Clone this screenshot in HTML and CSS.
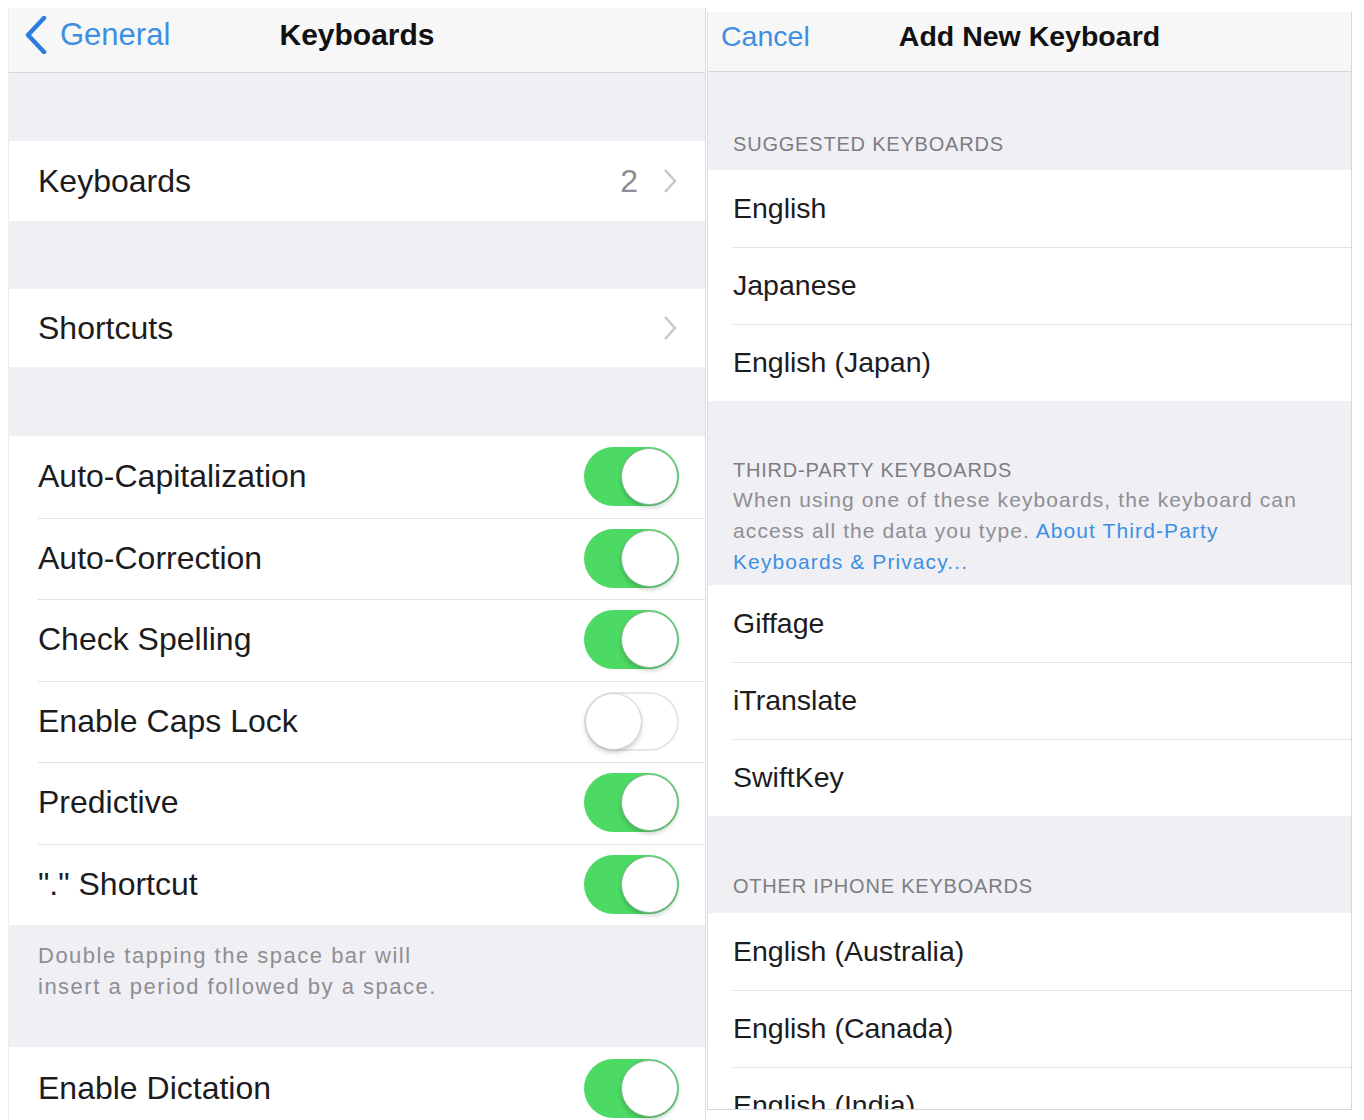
FILE: index.html
```html
<!DOCTYPE html>
<html lang="en">
<head>
    <meta charset="UTF-8">
    <meta name="viewport" content="width=device-width, initial-scale=1.0">
    <title>Keyboards</title>
    <link rel="stylesheet" href="styles.css">
</head>
<body>
    <div class="screens">
        <div class="panel left">
            <div class="nav">
                <a class="back" href="#">
                    <svg width="22" height="38" viewBox="0 0 22 38"><polyline points="19,2 3,19 19,36" fill="none" stroke="#2b7de1" stroke-width="4.5" stroke-linecap="round" stroke-linejoin="round"/></svg>
                    <span>General</span>
                </a>
                <div class="title">Keyboards</div>
                <div></div>
            </div>

            <div class="gap g68"></div>
            <div class="row h80">
                <span class="label">Keyboards</span>
                <span class="value">2</span>
                <svg class="chev" width="14" height="26" viewBox="0 0 14 26"><polyline points="2,2 12,13 2,24" fill="none" stroke="#c7c7cc" stroke-width="2.5"/></svg>
            </div>
            <div class="gap g68"></div>
            <div class="row h78">
                <span class="label">Shortcuts</span>
                <svg class="chev" width="14" height="26" viewBox="0 0 14 26"><polyline points="2,2 12,13 2,24" fill="none" stroke="#c7c7cc" stroke-width="2.5"/></svg>
            </div>
            <div class="gap g69"></div>

            <div class="group">
                <div class="row toggle-row"><span class="label">Auto-Capitalization</span><span class="switch on"></span></div>
                <div class="row toggle-row"><span class="label">Auto-Correction</span><span class="switch on"></span></div>
                <div class="row toggle-row"><span class="label">Check Spelling</span><span class="switch on"></span></div>
                <div class="row toggle-row"><span class="label">Enable Caps Lock</span><span class="switch"></span></div>
                <div class="row toggle-row"><span class="label">Predictive</span><span class="switch on"></span></div>
                <div class="row toggle-row"><span class="label">&quot;.&quot; Shortcut</span><span class="switch on"></span></div>
            </div>
            <div class="footer-note">
                Double tapping the space bar will<br>
                insert a period followed by a space.
            </div>
            <div class="row toggle-row last"><span class="label">Enable Dictation</span><span class="switch on"></span></div>
        </div>

        <div class="panel right">
            <div class="nav">
                <a class="cancel" href="#">Cancel</a>
                <div class="title">Add New Keyboard</div>
                <div></div>
            </div>

            <div class="section-head h98">SUGGESTED KEYBOARDS</div>
            <div class="group">
                <div class="row item">English</div>
                <div class="row item">Japanese</div>
                <div class="row item">English (Japan)</div>
            </div>

            <div class="section-head tall">
                THIRD-PARTY KEYBOARDS
                <p class="desc">When using one of these keyboards, the keyboard can<br>access all the data you type. <a href="#">About Third-Party<br>Keyboards &amp; Privacy...</a></p>
            </div>
            <div class="group">
                <div class="row item">Giffage</div>
                <div class="row item">iTranslate</div>
                <div class="row item">SwiftKey</div>
            </div>

            <div class="section-head h97">OTHER IPHONE KEYBOARDS</div>
            <div class="group">
                <div class="row item">English (Australia)</div>
                <div class="row item">English (Canada)</div>
                <div class="row item">English (India)</div>
            </div>
        </div>
    </div>
</body>
</html>
```

FILE: styles.css
```css
body {
    margin: 0;
    padding: 0;
    background: #fff;
    font-family: "Liberation Sans", Arial, sans-serif;
    color: #1c1c1e;
    overflow: hidden;
}
.screens {
    display: flex;
    align-items: flex-start;
    gap: 1px;
    padding: 8px 0 0 8px;
    height: 1112px;
}
.panel {
    background: #efeff4;
    overflow: hidden;
    display: flex;
    flex-direction: column;
}
.panel.left {
    width: 698px;
    height: 1112px;
    border-left: 1px solid #ececf0;
    border-right: 1px solid #dcdce0;
    box-sizing: border-box;
}
.panel.right {
    width: 645px;
    height: 1098px;
    margin-top: 4px;
    border-left: 1px solid #dcdce0;
    border-right: 1px solid #d8d8dc;
    border-bottom: 1px solid #d8d8dc;
    box-sizing: border-box;
}
.nav {
    display: grid;
    grid-template-columns: 1fr auto 1fr;
    align-items: center;
    height: 64px;
    background: #f7f7f8;
    border-bottom: 1px solid #d6d6da;
    flex-shrink: 0;
}
.right .nav {
    height: 59px;
}
.nav .title {
    font-weight: bold;
    font-size: 30px;
    color: #111;
    padding-bottom: 10px;
}
.right .nav .title {
    font-size: 28.5px;
    padding-bottom: 10px;
}
.back {
    display: flex;
    align-items: center;
    gap: 13px;
    padding-left: 16px;
    color: #3d8fe3;
    text-decoration: none;
    font-size: 31px;
    padding-bottom: 10px;
}
.cancel {
    padding-left: 13px;
    color: #3d8fe3;
    text-decoration: none;
    font-size: 28.5px;
    padding-bottom: 10px;
}
.gap {
    flex-shrink: 0;
}
.g68 { height: 68px; }
.g69 { height: 69px; }
.row {
    display: flex;
    align-items: center;
    background: #fff;
    flex-shrink: 0;
    box-sizing: border-box;
}
.left .row {
    padding: 0 26px 0 29px;
    font-size: 32px;
}
.h80 { height: 80px; }
.h78 { height: 78px; }
.label {
    flex: 1;
}
.value {
    color: #8e8e93;
    margin-right: 25px;
}
.chev {
    margin-right: 2px;
}
.group {
    background: #fff;
    flex-shrink: 0;
}
.toggle-row {
    height: 81.5px;
    position: relative;
}
.group .row + .row::before {
    content: "";
    position: absolute;
    top: 0;
    left: 29px;
    right: 0;
    border-top: 1px solid #e2e2e6;
}
.switch {
    width: 95px;
    height: 59px;
    border-radius: 30px;
    background: #fff;
    box-shadow: inset 0 0 0 2px #e6e6ea;
    position: relative;
    flex-shrink: 0;
}
.switch::after {
    content: "";
    position: absolute;
    top: 1px;
    left: 1px;
    width: 55px;
    height: 55px;
    border-radius: 50%;
    background: #fff;
    border: 1px solid #d2d2d6;
    box-shadow: 0 3px 4px rgba(0, 0, 0, 0.18);
}
.switch.on {
    background: #4cd964;
    box-shadow: none;
}
.switch.on::after {
    left: auto;
    right: 1px;
    border-color: #8fb89a;
}
.footer-note {
    height: 122px;
    box-sizing: border-box;
    padding: 15px 0 0 29px;
    font-size: 22px;
    line-height: 31px;
    letter-spacing: 1.5px;
    color: #8e8e93;
    flex-shrink: 0;
}
.toggle-row.last {
    height: 90px;
    padding-bottom: 8px;
}
.right .row {
    padding-left: 25px;
    font-size: 28.5px;
    position: relative;
    height: 77px;
}
.right .group .row + .row::before {
    left: 25px;
}
.section-head {
    flex-shrink: 0;
    box-sizing: border-box;
    padding: 0 0 14px 25px;
    font-size: 20px;
    letter-spacing: 0.8px;
    color: #7d7d82;
    display: flex;
    flex-direction: column;
    justify-content: flex-end;
}
.h98 { height: 98px; }
.h97 { height: 97px; padding-bottom: 15px; }
.section-head.tall {
    height: 184px;
    padding-bottom: 8px;
}
.desc {
    margin: 2px 0 0;
    font-size: 21px;
    line-height: 31px;
    letter-spacing: 1.1px;
    color: #8e8e93;
}
.desc a {
    color: #3d8fe3;
    text-decoration: none;
}
```
